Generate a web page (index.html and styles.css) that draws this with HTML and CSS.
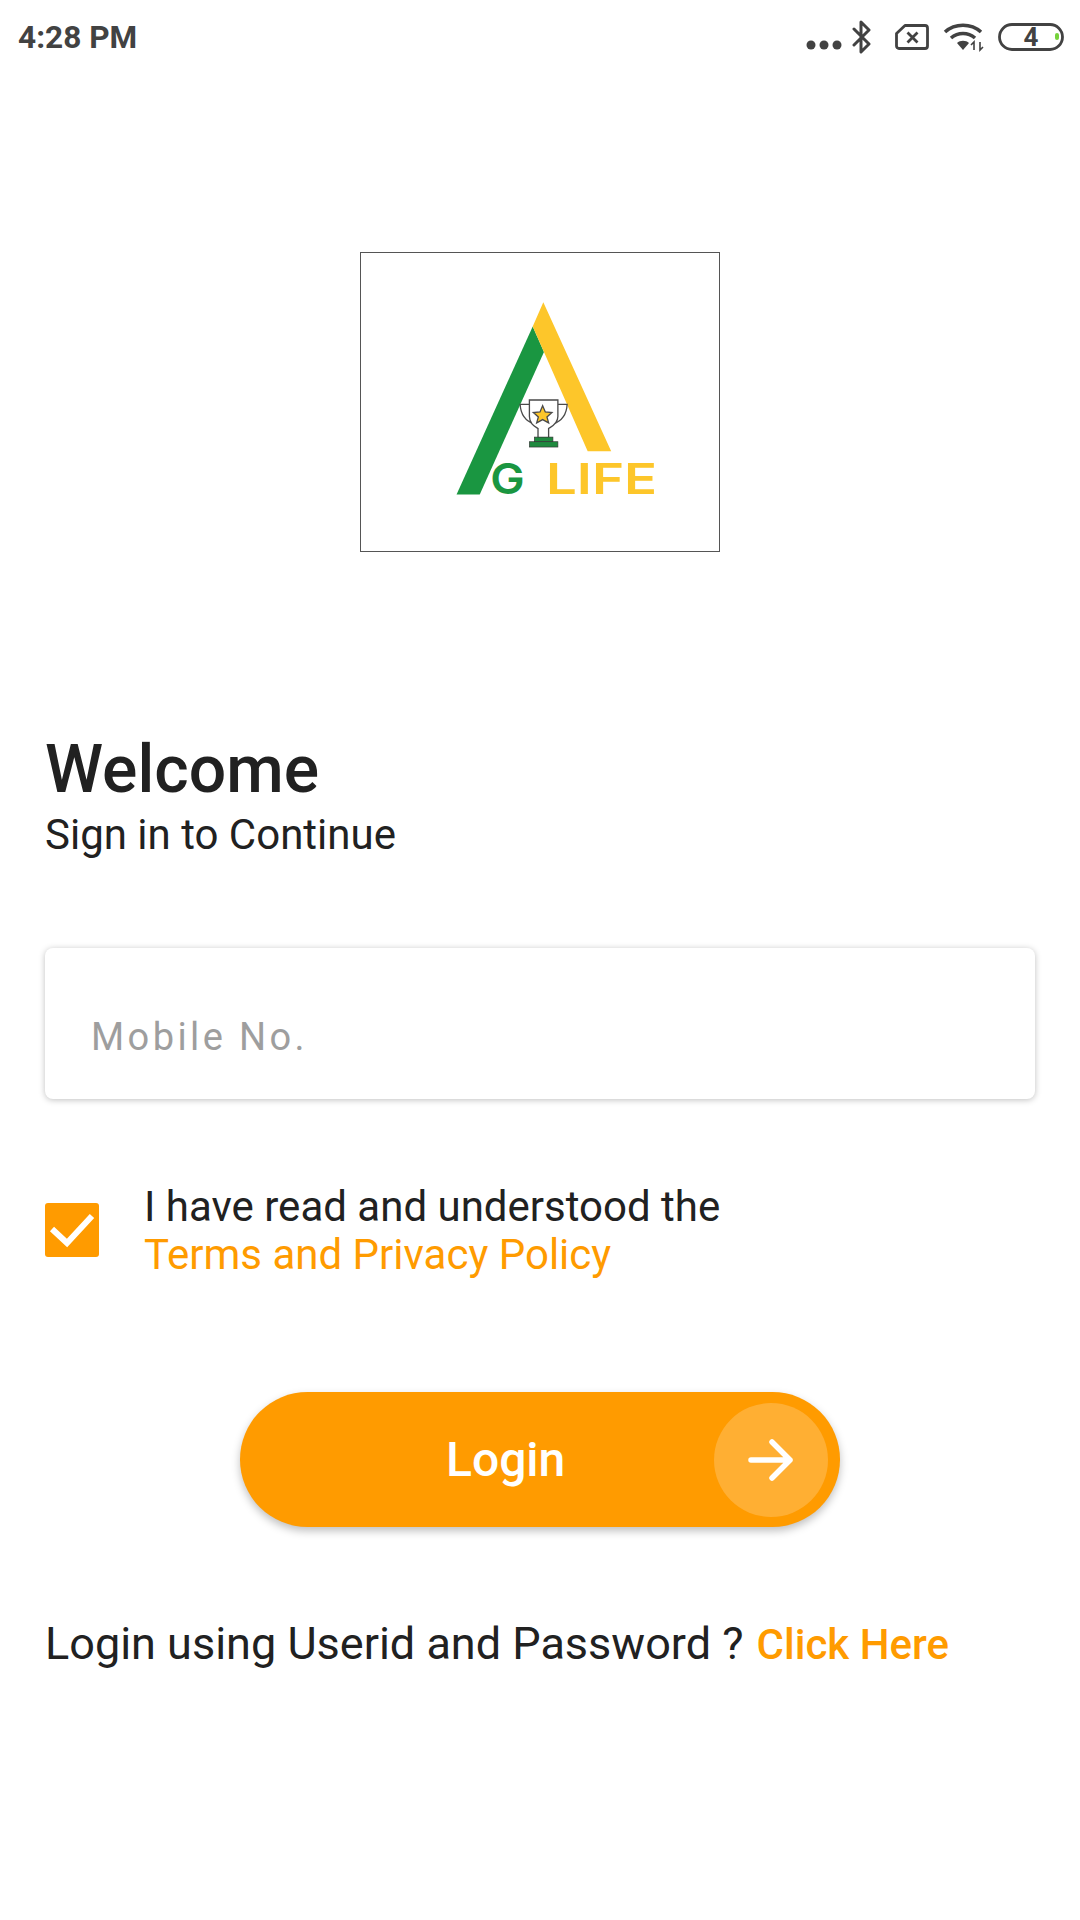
FILE: index.html
```html
<!DOCTYPE html>
<html>
<head>
    <title>AG Life Login</title>
    <link rel="stylesheet" href="styles.css">
</head>
<body>
    <div class="status-bar">
        <span class="status-time">4:28 PM</span>
        <div class="status-icons">
            <svg class="icon-dots" viewBox="0 0 38 10" width="38" height="10"><circle cx="5" cy="5" r="4.5"/><circle cx="18" cy="5" r="4.5"/><circle cx="31" cy="5" r="4.5"/></svg>
            <svg class="icon-bt" viewBox="0 0 20 34" width="20" height="34"><path d="M2 9 L17 24 L9 32 V2 L17 10 L2 25" fill="none" stroke="#424242" stroke-width="3" stroke-linejoin="round" stroke-linecap="round"/></svg>
            <svg class="icon-sim" viewBox="0 0 34 26" width="34" height="26"><path d="M10 1.5 H30 a2.5 2.5 0 0 1 2.5 2.5 V22 a2.5 2.5 0 0 1 -2.5 2.5 H4 a2.5 2.5 0 0 1 -2.5 -2.5 V9.5 Z" fill="none" stroke="#424242" stroke-width="2.8" stroke-linejoin="round"/><path d="M12.5 8.5 L22.5 18.5 M22.5 8.5 L12.5 18.5" stroke="#424242" stroke-width="2.8"/></svg>
            <svg class="icon-wifi" viewBox="0 0 42 30" width="42" height="30"><g fill="none" stroke="#424242" stroke-width="3.6"><path d="M2 10 C12 1 28 1 38 10"/><path d="M8 16 C15 10 25 10 32 16"/></g><path d="M14 21 C17 18 23 18 26 21 L20 28 Z" fill="#424242"/><path d="M31 28 V20 L28 23 M37 20 V28 L40 25" fill="none" stroke="#424242" stroke-width="1.6"/></svg>
            <svg class="icon-battery" viewBox="0 0 66 28" width="66" height="28"><rect x="1.5" y="1.5" width="63" height="25" rx="12.5" fill="none" stroke="#424242" stroke-width="2.8"/><text x="33" y="22.5" text-anchor="middle" class="battery-num">4</text><rect x="57" y="10" width="4" height="7" rx="2" fill="#76d23c"/></svg>
        </div>
    </div>

    <div class="logo-box">
        <svg class="logo" viewBox="30 36 1080 900" width="358" height="298">
            <polygon points="318,765 388,765 582,335 548,258" fill="#1a9641"/>
            <polygon points="580,185 785,635 714,635 582,335 548,258" fill="#fdc62a"/>
            <g fill="#fff" stroke="#4a4a4a" stroke-width="4">
                <path d="M538 493 H510 C512 530 530 545 552 552 M624 493 H652 C650 530 632 545 610 552" fill="none"/>
                <path d="M538 480 H624 V530 C624 552 606 560 596 566 V594 H564 V566 C554 560 538 552 538 530 Z"/>
            </g>
            <polygon points="578,497 586,516 606,518 591,531 596,549 578,539 560,549 565,531 550,518 570,516" fill="#fdc62a" stroke="#4a4a4a" stroke-width="4"/>
            <rect x="553" y="592" width="56" height="14" fill="#1e8a3e" stroke="#333" stroke-width="2"/>
            <rect x="538" y="606" width="86" height="16" fill="#1e8a3e" stroke="#333" stroke-width="2"/>
            <text x="420" y="765" class="logo-g" textLength="104" lengthAdjust="spacingAndGlyphs">G</text>
            <text x="588" y="765" class="logo-life" textLength="336" lengthAdjust="spacingAndGlyphs">LIFE</text>
        </svg>
    </div>

    <div class="content">
        <h1 class="welcome">Welcome</h1>
        <p class="subtitle">Sign in to Continue</p>

        <div class="mobile-field">Mobile No.</div>

        <div class="terms-row">
            <span class="checkbox">
                <svg viewBox="0 0 54 54" width="54" height="54"><path d="M7 26 L22 40 L47 13" fill="none" stroke="#fff" stroke-width="6"/></svg>
            </span>
            <p class="terms-text">I have read and understood the<br><span class="orange">Terms and Privacy Policy</span></p>
        </div>

        <div class="login-wrap">
            <button class="login-btn" type="button">
                <span class="login-label">Login</span>
                <span class="login-arrow">
                    <svg viewBox="0 0 46 46" width="46" height="46"><path d="M3 23 H42 M24 5 L42 23 L24 41" fill="none" stroke="#fff" stroke-width="5.5" stroke-linecap="round" stroke-linejoin="round"/></svg>
                </span>
            </button>
        </div>

        <p class="alt-login">Login using Userid and Password ? <span class="click-here">Click Here</span></p>
    </div>
</body>
</html>
```

FILE: styles.css
```css
body {
    font-family: Roboto, "Liberation Sans", sans-serif;
    background-color: #fff;
    color: #212121;
    margin: 0;
    padding: 0;
}

p, h1 {
    margin: 0;
}

.status-bar {
    display: flex;
    justify-content: space-between;
    align-items: center;
    height: 74px;
    padding: 0 16px 0 18px;
}

.status-time {
    font-size: 31.6px;
    font-weight: 700;
    color: #424242;
}

.status-icons {
    display: flex;
    align-items: center;
}

.icon-dots {
    fill: #424242;
    margin: 16px 8px 0 0;
}

.icon-bt {
    margin-right: 23px;
}

.icon-sim {
    margin-right: 14px;
}

.icon-wifi {
    margin-right: 13px;
}

.battery-num {
    font-size: 26px;
    font-weight: 700;
    fill: #424242;
}

.logo-box {
    width: 360px;
    height: 300px;
    box-sizing: border-box;
    margin: 178px auto 0;
    border: 1px solid #555;
}

.logo {
    display: block;
}

.logo-g, .logo-life {
    font-family: Inter, sans-serif;
    font-size: 130px;
    font-weight: 600;
}

.logo-g {
    fill: #1a9641;
}

.logo-life {
    fill: #fdc62a;
}

.content {
    padding: 0 45px;
}

.welcome {
    font-size: 66px;
    font-weight: 500;
    line-height: 83px;
    margin-top: 176px;
}

.subtitle {
    font-size: 42px;
    line-height: 48px;
}

.mobile-field {
    box-sizing: border-box;
    height: 151px;
    margin-top: 89px;
    padding: 66px 0 0 46px;
    font-size: 38px;
    line-height: 46px;
    letter-spacing: 3.4px;
    color: #9e9e9e;
    background-color: #fff;
    border-radius: 8px;
    box-shadow: 0 1px 6px rgba(0, 0, 0, 0.25);
}

.terms-row {
    display: flex;
    align-items: center;
    gap: 45px;
    margin-top: 81px;
}

.checkbox {
    display: block;
    width: 54px;
    height: 54px;
    background-color: #ff9b00;
    border-radius: 3px;
}

.checkbox svg {
    display: block;
}

.terms-text {
    font-size: 42px;
    line-height: 48px;
    margin-top: 3px;
}

.orange {
    color: #ff9b00;
}

.login-wrap {
    display: flex;
    justify-content: center;
    margin-top: 113px;
}

.login-btn {
    display: flex;
    align-items: center;
    justify-content: space-between;
    box-sizing: border-box;
    width: 600px;
    height: 135px;
    padding: 0 12px 0 206px;
    border: none;
    border-radius: 68px;
    background-color: #ff9b00;
    box-shadow: 0 4px 8px rgba(0, 0, 0, 0.25);
    font-family: inherit;
}

.login-label {
    font-size: 48px;
    font-weight: 500;
    color: #fff;
}

.login-arrow {
    display: flex;
    align-items: center;
    justify-content: center;
    width: 114px;
    height: 114px;
    border-radius: 50%;
    background-color: rgba(255, 255, 255, 0.2);
}

.alt-login {
    font-size: 45px;
    line-height: 48px;
    margin-top: 93px;
}

.click-here {
    font-size: 42px;
    font-weight: 500;
    color: #ff9b00;
    margin-left: 2px;
}
```
